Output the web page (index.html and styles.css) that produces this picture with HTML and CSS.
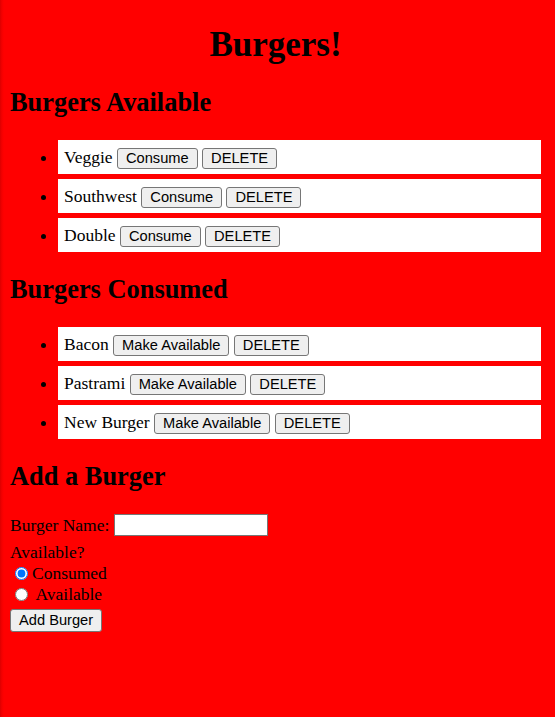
FILE: index.html
```html
<!DOCTYPE html>
<html>
<head>
<meta charset="utf-8">
<title>Burgers</title>
<link rel="stylesheet" href="styles.css">
</head>
<body>
<div class="page">
  <h1 class="title">Burgers!</h1>

  <h2 class="section-title">Burgers Available</h2>
  <ul class="burger-list">
    <li class="burger">Veggie <button class="btn">Consume</button> <button class="btn">DELETE</button></li>
    <li class="burger">Southwest <button class="btn">Consume</button> <button class="btn">DELETE</button></li>
    <li class="burger">Double <button class="btn">Consume</button> <button class="btn">DELETE</button></li>
  </ul>

  <h2 class="section-title">Burgers Consumed</h2>
  <ul class="burger-list">
    <li class="burger">Bacon <button class="btn">Make Available</button> <button class="btn">DELETE</button></li>
    <li class="burger">Pastrami <button class="btn">Make Available</button> <button class="btn">DELETE</button></li>
    <li class="burger">New Burger <button class="btn">Make Available</button> <button class="btn">DELETE</button></li>
  </ul>

  <h2 class="section-title">Add a Burger</h2>
  <form class="add-form">
    <div class="name-row"><label for="bn">Burger Name:</label>&nbsp;<input id="bn" class="text-input" type="text"></div>
    <div class="line">Available?</div>
    <div class="line"><input class="radio" type="radio" name="av" checked>Consumed</div>
    <div class="line"><input class="radio" type="radio" name="av"> Available</div>
    <button class="btn submit" type="button">Add Burger</button>
  </form>
</div>
</body>
</html>
```

FILE: styles.css
```css
html {
  background: #ff0000;
}
body {
  margin: 0;
  min-height: 717px;
  background: linear-gradient(to right, #dd0000 0, #f40000 2px, #ff0000 4px);
  font-family: "Liberation Serif", "Times New Roman", serif;
  font-size: 17.5px;
  color: #000;
}
.page {
  padding: 1px 14px 20px 10px;
}
.title {
  font-size: 35px;
  font-weight: bold;
  line-height: 37px;
  text-align: center;
  margin: 25px 0 25px;
}
.section-title {
  font-size: 26.4px;
  font-weight: bold;
  line-height: 28px;
  margin: 23px 0 24px;
}
.burger-list {
  list-style: disc;
  margin: 0;
  padding: 0 0 0 48px;
}
.burger {
  background: #fff;
  padding: 6px;
  line-height: 22px;
  height: 22px;
  margin-bottom: 5px;
}
.burger:last-child {
  margin-bottom: 0;
}
.btn {
  font-family: "Liberation Sans", Arial, sans-serif;
  font-size: 14.67px;
  line-height: 17px;
  color: #000;
  background: #efefef;
  border: 1px solid #767676;
  border-radius: 3px;
  padding: 1px 8px;
  margin: 0;
}
.add-form {
  margin-top: 23px;
}
.name-row {
  display: flex;
  align-items: center;
  height: 22px;
  line-height: 18px;
}
.text-input {
  width: 154px;
  height: 22px;
  box-sizing: border-box;
  border: 1px solid #767676;
  border-radius: 0;
  padding: 1px 2px;
  margin: 0;
  background: #fff;
}
.name-row + .line {
  margin-top: 6px;
}
.line {
  line-height: 21px;
  height: 21px;
}
.radio {
  width: 13px;
  height: 13px;
  margin: 0 4px 0 5px;
  vertical-align: -1px;
}
.submit {
  margin-top: 4px;
  padding: 2px 8px;
}
```
